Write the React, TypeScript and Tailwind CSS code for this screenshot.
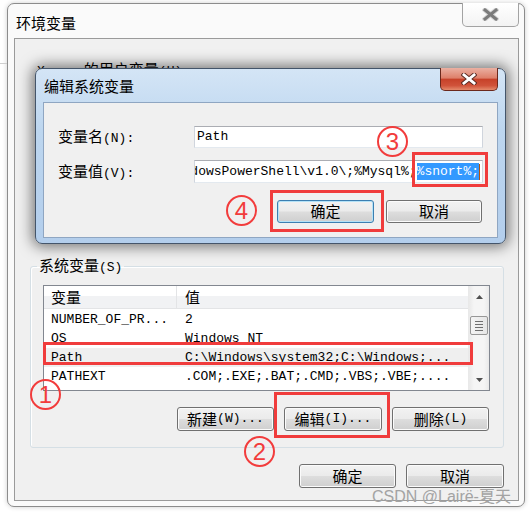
import type { ReactNode } from 'react';

const rows = [
  { name: 'NUMBER_OF_PR...', value: '2' },
  { name: 'OS', value: 'Windows_NT' },
  { name: 'Path', value: 'C:\\Windows\\system32;C:\\Windows;...' },
  { name: 'PATHEXT', value: '.COM;.EXE;.BAT;.CMD;.VBS;.VBE;....' },
];

function Zh({ children }: { children: ReactNode }) {
  return <span className="font-['Noto_Sans_CJK_SC',sans-serif] text-[15px]">{children}</span>;
}

function WinButton({
  children,
  className = '',
  focused = false,
}: {
  children: ReactNode;
  className?: string;
  focused?: boolean;
}) {
  return (
    <div
      className={`flex shrink-0 items-center justify-center rounded-[3px] border bg-[linear-gradient(#f2f2f2,#ebebeb_48%,#dddddd_52%,#cfcfcf)] ${
        focused
          ? 'border-[#3c7fb1] shadow-[inset_0_0_0_1px_#b4e2f7]'
          : 'border-[#707070] shadow-[inset_0_0_0_1px_#fbfbfb]'
      } ${className}`}
    >
      {children}
    </div>
  );
}

function Mark({ n, className }: { n: string; className: string }) {
  return (
    <div
      className={`absolute flex h-[31px] w-[31px] items-center justify-center rounded-full border-2 border-[#f23c3c] font-['Liberation_Sans',sans-serif] text-[24px] leading-none text-[#f23c3c] ${className}`}
    >
      {n}
    </div>
  );
}

function CloseX({ fill, outline, className }: { fill: string; outline: string; className: string }) {
  return (
    <svg viewBox="0 0 17 13" className={className}>
      <path d="M3 2 L14 11 M14 2 L3 11" stroke={outline} strokeWidth="5" strokeLinecap="square" />
      <path d="M3 2 L14 11 M14 2 L3 11" stroke={fill} strokeWidth="3" strokeLinecap="square" />
    </svg>
  );
}

function Arrow({ up }: { up: boolean }) {
  return (
    <svg viewBox="0 0 7 4" className="h-[4px] w-[7px]">
      <polygon points={up ? '0,4 3.5,0 7,4' : '0,0 7,0 3.5,4'} fill="#505050" />
    </svg>
  );
}

function VariableList() {
  return (
    <div className="flex h-[106px] w-[447px] border border-[#828790] bg-white">
      <div className="flex w-[424px] flex-col">
        <div className="flex h-[23px] border-b border-[#e3e4e6] bg-[linear-gradient(#ffffff,#ffffff_45%,#f1f2f4_46%,#f1f2f4)]">
          <div className="flex w-[133px] items-center border-r border-[#e3e4e6] pl-[7px]">
            <Zh>变量</Zh>
          </div>
          <div className="flex items-center pl-[8px]">
            <Zh>值</Zh>
          </div>
        </div>
        <div className="mt-[1px] flex flex-col">
          {rows.map((row) => (
            <div
              key={row.name}
              className={`flex h-[19px] items-center leading-[19px] ${row.name === 'Path' ? 'bg-[#efefef]' : ''}`}
            >
              <div className="w-[133px] whitespace-nowrap pl-[7px]">{row.name}</div>
              <div className="whitespace-nowrap pl-[8px]">{row.value}</div>
            </div>
          ))}
        </div>
      </div>
      <div className="flex w-[21px] flex-col items-center border-l border-[#e9e9e9] bg-[linear-gradient(90deg,#e9e9e9,#f5f5f5_25%,#f5f5f5_75%,#e9e9e9)]">
        <div className="flex h-[21px] items-center justify-center">
          <Arrow up />
        </div>
        <div className="mt-[9px] flex h-[19px] w-[18px] flex-col items-center justify-center gap-[2px] rounded-[2px] border border-[#979797] bg-[linear-gradient(90deg,#f4f4f4,#e6e6e6)]">
          <div className="h-[1px] w-[8px] bg-[#6f6f6f]" />
          <div className="h-[1px] w-[8px] bg-[#6f6f6f]" />
          <div className="h-[1px] w-[8px] bg-[#6f6f6f]" />
          <div className="h-[1px] w-[8px] bg-[#6f6f6f]" />
        </div>
        <div className="flex-1" />
        <div className="flex h-[21px] items-center justify-center">
          <Arrow up={false} />
        </div>
      </div>
    </div>
  );
}

function EditDialog() {
  return (
    <div className="absolute left-[35px] top-[68px] flex h-[176px] w-[471px] flex-col rounded-[7px] border border-[#44556a] bg-[linear-gradient(#d4e5f6,#bdd6ef_35%,#b3ceec)] px-[7px] pb-[5px] shadow-[0_0_14px_3px_rgba(0,0,0,0.5)]">
      <div className="flex h-[33px] shrink-0 items-start justify-between">
        <div className="ml-[1px] mt-[7px] font-['Noto_Sans_CJK_SC',sans-serif] text-[15px] leading-[20px]">
          编辑系统变量
        </div>
        <div className="-mt-[1px] flex h-[23px] w-[58px] items-center justify-center rounded-b-[5px] border border-t-0 border-[#6b281c] bg-[linear-gradient(#eab0a2,#de806b_45%,#c7422a_52%,#d0533a_80%,#e48a6c)]">
          <CloseX fill="#ffffff" outline="#5a2a22" className="h-[12px] w-[16px]" />
        </div>
      </div>
      <div className="flex h-[136px] flex-col border border-[#8fa6c2] bg-[#f0f0f0] pl-[14px] pr-[14px] pt-[23px]">
        <div className="flex h-[22px] items-center">
          <div className="w-[136px] whitespace-nowrap">
            <Zh>变量名</Zh>(N):
          </div>
          <div className="flex h-[22px] w-[289px] items-center border border-[#abadb3] border-x-[#d0d5dd] border-b-[#e3e9ef] bg-white pl-[2px]">
            Path
          </div>
        </div>
        <div className="mt-[12px] flex h-[23px] items-center">
          <div className="w-[136px] whitespace-nowrap">
            <Zh>变量值</Zh>(V):
          </div>
          <div className="flex h-[23px] w-[289px] items-center justify-end overflow-hidden border border-[#abadb3] border-x-[#d0d5dd] border-b-[#e3e9ef] bg-white pr-[2px]">
            <div className="flex shrink-0 items-center whitespace-nowrap">
              <span>C:\Windows\System32\WindowsPowerShell\v1.0\;%Mysql%;</span>
              <span className="bg-[#3399ff] leading-[17px] text-white">%snort%;</span>
              <span className="h-[16px] w-[1px] bg-[#b3540f]" />
            </div>
          </div>
        </div>
        <div className="mr-[1px] mt-[17px] flex justify-end gap-[12px]">
          <WinButton focused className="h-[23px] w-[97px]">
            <Zh>确定</Zh>
          </WinButton>
          <WinButton className="h-[23px] w-[96px]">
            <Zh>取消</Zh>
          </WinButton>
        </div>
      </div>
    </div>
  );
}

export default function App() {
  return (
    <div className="relative h-[513px] w-[532px] overflow-hidden bg-white font-['Liberation_Mono','Noto_Sans_CJK_SC',monospace] text-[13px] text-black">
      <div className="absolute left-0 top-[63px] h-[1px] w-[7px] bg-[#cfcfcf]" />

      <div className="ml-[7px] mt-[3px] flex h-[504px] w-[518px] flex-col rounded-[7px] border border-[#8c8c8c] bg-[#fafafa] shadow-[0_0_5px_rgba(0,0,0,0.2)]">
        <div className="flex h-[34px] shrink-0 items-start justify-between pl-[8px] pr-[5px]">
          <div className="mt-[9px] font-['Noto_Sans_CJK_SC',sans-serif] text-[15px] leading-[20px]">环境变量</div>
          <div className="-mt-[1px] flex h-[24px] w-[57px] items-center justify-center rounded-b-[5px] border border-t-0 border-[#a3a3a3] bg-[linear-gradient(#ffffff,#f3f3f3)]">
            <CloseX fill="#7b7b7b" outline="#d8d8d8" className="h-[13px] w-[17px]" />
          </div>
        </div>

        <div className="ml-[6px] flex w-[505px] flex-col border border-[#9a9a9a] bg-[#f0f0f0] pb-[12px]">
          <div className="h-[218px] pl-[22px] pt-[22px]">
            <div className="whitespace-nowrap leading-[16px]">
              Xuser <Zh>的用户变量</Zh>(U)
            </div>
          </div>

          <fieldset className="ml-[15px] w-[474px] rounded-[3px] border border-[#d5dfe5] pb-[16px] shadow-[inset_1px_1px_0_#ffffff]">
            <legend className="ml-[6px] px-[2px] leading-[16px]">
              <Zh>系统变量</Zh>(S)
            </legend>
            <div className="pl-[12px] pt-[9px]">
              <VariableList />
              <div className="mt-[16px] flex w-[446px] justify-end gap-[10px]">
                <WinButton className="h-[24px] w-[97px]">
                  <Zh>新建</Zh>(W)...
                </WinButton>
                <WinButton className="h-[24px] w-[98px]">
                  <Zh>编辑</Zh>(I)...
                </WinButton>
                <WinButton className="h-[24px] w-[97px]">
                  <Zh>删除</Zh>(L)
                </WinButton>
              </div>
            </div>
          </fieldset>

          <div className="mt-[16px] flex justify-end gap-[10px] pr-[14px]">
            <WinButton className="h-[24px] w-[97px]">
              <Zh>确定</Zh>
            </WinButton>
            <WinButton className="h-[24px] w-[98px]">
              <Zh>取消</Zh>
            </WinButton>
          </div>
        </div>
      </div>

      <EditDialog />

      <div className="absolute left-[43px] top-[342px] h-[23px] w-[430px] border-[3px] border-[#f03c3c]" />
      <div className="absolute left-[412px] top-[152px] h-[35px] w-[76px] border-[3px] border-[#f03c3c]" />
      <div className="absolute left-[270px] top-[190px] h-[42px] w-[114px] border-[3px] border-[#f03c3c]" />
      <div className="absolute left-[274px] top-[392px] h-[46px] w-[116px] border-[3px] border-[#f03c3c]" />

      <Mark n="1" className="left-[30px] top-[379px]" />
      <Mark n="2" className="left-[244px] top-[436px]" />
      <Mark n="3" className="left-[377px] top-[126px]" />
      <Mark n="4" className="left-[226px] top-[195px]" />

      <div className="absolute left-[372px] top-[487px] whitespace-nowrap font-['Liberation_Sans','Noto_Sans_CJK_SC',sans-serif] text-[16px] leading-[20px] text-[#a3a3a3]">
        CSDN @Lairë-夏天
      </div>
    </div>
  );
}
